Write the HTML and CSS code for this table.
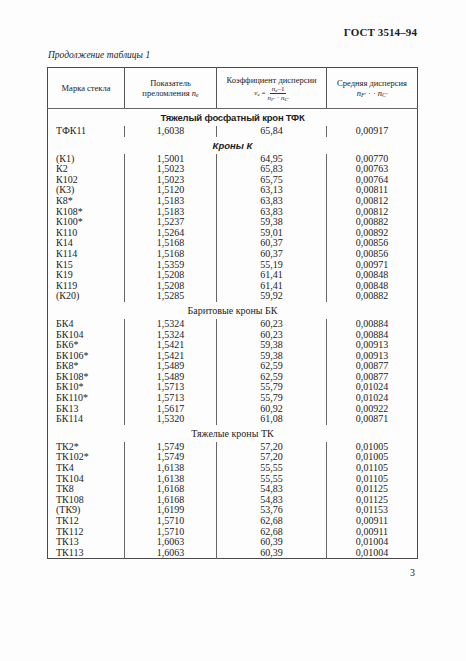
FILE: index.html
```html
<!DOCTYPE html>
<html lang="ru">
<head>
<meta charset="utf-8">
<link rel="stylesheet" href="styles.css">
</head>
<body>
<div class="page">
  <div class="doc-id">ГОСТ 3514–94</div>
  <div class="caption">Продолжение таблицы 1</div>
  <table class="glass">
    <colgroup>
      <col class="c1"><col class="c2"><col class="c3"><col class="c4">
    </colgroup>
    <thead>
      <tr class="head">
        <th>Марка стекла</th>
        <th>Показатель<br>преломления <i>n<sub>e</sub></i></th>
        <th>Коэффициент дисперсии<br>
          <span class="formula"><i>ν<sub>e</sub></i> = <span class="frac"><span class="num"><i>n<sub>e</sub></i>–1</span><span class="den"><i>n<sub>F'</sub></i> · <i>n<sub>C'</sub></i></span></span></span>
        </th>
        <th>Средняя дисперсия<br><i>n<sub>F'</sub></i> · · <i>n<sub>C'</sub></i></th>
      </tr>
    </thead>
    <tbody>
      <tr class="sec"><td colspan="4" class="s-tfk">Тяжелый фосфатный крон ТФК</td></tr>
      <tr class="first"><td>ТФК11</td><td>1,6038</td><td>65,84</td><td>0,00917</td></tr>

      <tr class="sec"><td colspan="4" class="s-k">Кроны К</td></tr>
      <tr class="first"><td>(К1)</td><td>1,5001</td><td>64,95</td><td>0,00770</td></tr>
      <tr><td>К2</td><td>1,5023</td><td>65,83</td><td>0,00763</td></tr>
      <tr><td>К102</td><td>1,5023</td><td>65,75</td><td>0,00764</td></tr>
      <tr><td>(К3)</td><td>1,5120</td><td>63,13</td><td>0,00811</td></tr>
      <tr><td>К8*</td><td>1,5183</td><td>63,83</td><td>0,00812</td></tr>
      <tr><td>К108*</td><td>1,5183</td><td>63,83</td><td>0,00812</td></tr>
      <tr><td>К100*</td><td>1,5237</td><td>59,38</td><td>0,00882</td></tr>
      <tr><td>К110</td><td>1,5264</td><td>59,01</td><td>0,00892</td></tr>
      <tr><td>К14</td><td>1,5168</td><td>60,37</td><td>0,00856</td></tr>
      <tr><td>К114</td><td>1,5168</td><td>60,37</td><td>0,00856</td></tr>
      <tr><td>К15</td><td>1,5359</td><td>55,19</td><td>0,00971</td></tr>
      <tr><td>К19</td><td>1,5208</td><td>61,41</td><td>0,00848</td></tr>
      <tr><td>К119</td><td>1,5208</td><td>61,41</td><td>0,00848</td></tr>
      <tr><td>(К20)</td><td>1,5285</td><td>59,92</td><td>0,00882</td></tr>

      <tr class="sec"><td colspan="4" class="s-serif">Баритовые кроны БК</td></tr>
      <tr class="first"><td>БК4</td><td>1,5324</td><td>60,23</td><td>0,00884</td></tr>
      <tr><td>БК104</td><td>1,5324</td><td>60,23</td><td>0,00884</td></tr>
      <tr><td>БК6*</td><td>1,5421</td><td>59,38</td><td>0,00913</td></tr>
      <tr><td>БК106*</td><td>1,5421</td><td>59,38</td><td>0,00913</td></tr>
      <tr><td>БК8*</td><td>1,5489</td><td>62,59</td><td>0,00877</td></tr>
      <tr><td>БК108*</td><td>1,5489</td><td>62,59</td><td>0,00877</td></tr>
      <tr><td>БК10*</td><td>1,5713</td><td>55,79</td><td>0,01024</td></tr>
      <tr><td>БК110*</td><td>1,5713</td><td>55,79</td><td>0,01024</td></tr>
      <tr><td>БК13</td><td>1,5617</td><td>60,92</td><td>0,00922</td></tr>
      <tr><td>БК114</td><td>1,5320</td><td>61,08</td><td>0,00871</td></tr>

      <tr class="sec"><td colspan="4" class="s-serif">Тяжелые кроны ТК</td></tr>
      <tr class="first"><td>ТК2*</td><td>1,5749</td><td>57,20</td><td>0,01005</td></tr>
      <tr><td>ТК102*</td><td>1,5749</td><td>57,20</td><td>0,01005</td></tr>
      <tr><td>ТК4</td><td>1,6138</td><td>55,55</td><td>0,01105</td></tr>
      <tr><td>ТК104</td><td>1,6138</td><td>55,55</td><td>0,01105</td></tr>
      <tr><td>ТК8</td><td>1,6168</td><td>54,83</td><td>0,01125</td></tr>
      <tr><td>ТК108</td><td>1,6168</td><td>54,83</td><td>0,01125</td></tr>
      <tr><td>(ТК9)</td><td>1,6199</td><td>53,76</td><td>0,01153</td></tr>
      <tr><td>ТК12</td><td>1,5710</td><td>62,68</td><td>0,00911</td></tr>
      <tr><td>ТК112</td><td>1,5710</td><td>62,68</td><td>0,00911</td></tr>
      <tr><td>ТК13</td><td>1,6063</td><td>60,39</td><td>0,01004</td></tr>
      <tr><td>ТК113</td><td>1,6063</td><td>60,39</td><td>0,01004</td></tr>
    </tbody>
  </table>
  <div class="page-num">3</div>
</div>
</body>
</html>
```
FILE: styles.css
```css
html, body {
  margin: 0;
  padding: 0;
  background: #fdfdfd;
}

.page {
  width: 466px;
  height: 661px;
  box-sizing: border-box;
  padding: 25px 49px 0 47px;
  display: flex;
  flex-direction: column;
  font-family: "Liberation Serif", "Times New Roman", serif;
  color: #1c1c1c;
}

.doc-id {
  align-self: flex-end;
  font-size: 11px;
  font-weight: bold;
  line-height: 14px;
  letter-spacing: 0.1px;
}

.caption {
  margin-top: 10px;
  padding-left: 1px;
  font-size: 9.5px;
  font-style: italic;
  line-height: 12px;
}

.glass {
  margin-top: 6px;
  width: 370px;
  border-collapse: collapse;
  table-layout: fixed;
  border: 1px solid #4a4a4a;
}

.c1 { width: 77px; }
.c2 { width: 92px; }
.c3 { width: 110px; }
.c4 { width: 91px; }

.glass th {
  height: 40px;
  padding: 0 2px;
  font-weight: normal;
  font-size: 8.5px;
  line-height: 10px;
  text-align: center;
  vertical-align: middle;
  border-left: 1px solid #555;
  border-bottom: 1px solid #666;
}

.glass th:first-child { border-left: none; }

.glass sub {
  font-size: 0.7em;
  vertical-align: -0.25em;
  line-height: 0;
}

.formula {
  display: inline-flex;
  align-items: center;
  gap: 2px;
  font-size: 7px;
}

.frac {
  display: inline-flex;
  flex-direction: column;
  align-items: center;
  line-height: 8px;
}

.frac .num {
  border-bottom: 0.7px solid #333;
  padding: 0 2px;
}

.glass td {
  height: 10.6px;
  padding: 0;
  font-size: 10px;
  line-height: 10.6px;
  text-align: center;
  white-space: nowrap;
  border-left: 1px solid #666;
}

.glass td:first-child {
  border-left: none;
  text-align: left;
  padding-left: 8px;
}

.glass tr.sec td {
  height: 17px;
  line-height: 17px;
  text-align: center;
  padding-left: 0;
  border-left: none;
}

.glass td.s-tfk {
  font-family: "Liberation Sans", Arial, sans-serif;
  font-size: 9.5px;
  font-weight: bold;
  letter-spacing: -0.2px;
}

.glass td.s-k {
  font-family: "Liberation Sans", Arial, sans-serif;
  font-size: 9.5px;
  font-style: italic;
  font-weight: bold;
}

.glass td.s-serif {
  font-size: 10px;
}

.page-num {
  align-self: flex-end;
  margin-top: 8px;
  margin-right: 2px;
  font-size: 10px;
  line-height: 12px;
}
```
